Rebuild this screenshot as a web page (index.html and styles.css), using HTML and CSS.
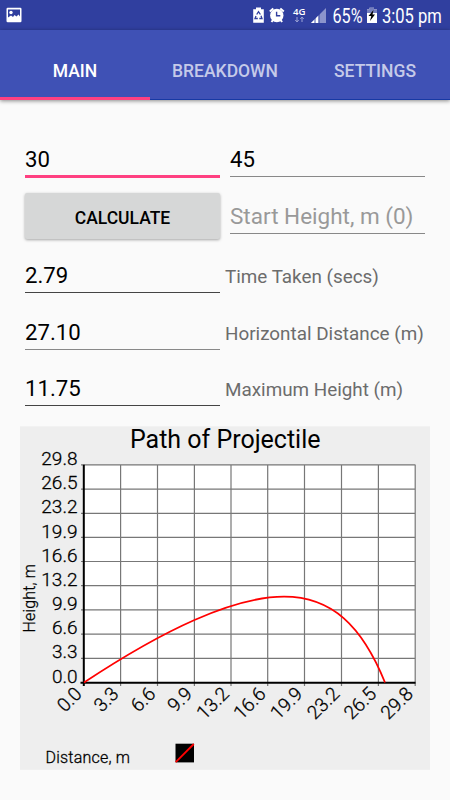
FILE: index.html
```html
<!DOCTYPE html>
<html lang="en">
<head>
<meta charset="utf-8">
<title>Projectile Calculator</title>
<link rel="stylesheet" href="styles.css">
</head>
<body>
<header class="status">
  <svg class="status-photo" width="16" height="16" viewBox="0 0 16 16"><rect x=".5" y=".8" width="15" height="14.5" rx="1.2" fill="#fff"/><path d="M2 2.500h12v7l-1.500-2-2 2-2-1.500-1.500 2L5 8.500l-3 2z" fill="#303f9f"/><circle cx="5" cy="5.500" r="1.700" fill="#fff"/></svg>
  <div class="status-right">
    <svg width="200" height="30" viewBox="250 0 200 30">
      <path d="M253.200 9.200h2.800V7.500h5v1.700h2.800v13.600h-10.600z" fill="#fff"/>
      <path d="M256.700 14.500l1.800-2.800 1.900 2.800M261 15.800l1 2.700h-2.700M257.800 18.500h-2.800l1-2.500" fill="none" stroke="#303f9f" stroke-width="1.300"/>
      <circle cx="276.800" cy="15.500" r="6.700" fill="#fff"/>
      <path d="M269.800 11.500l3.500-3M283.800 11.500l-3.500-3M273 20l-1.500 2M280.600 20l1.500 2" stroke="#fff" stroke-width="2"/>
      <path d="M276.600 11.800v4h3.700" fill="none" stroke="#303f9f" stroke-width="1.400"/>
      <text x="293" y="15" class="net" textLength="12.500" lengthAdjust="spacingAndGlyphs">4G</text>
      <path d="M297 17v4.500M295.300 20l1.700 2 1.700-2M302 22v-4.500M300.300 19l1.700-2 1.700 2" fill="none" stroke="#9ba3d5" stroke-width="1"/>
      <path d="M311 23L326 8v15z" fill="#8c94cc"/><path d="M311 23l7.500-7.500V23z" fill="#fff"/><path d="M315 17v6M319 13v10" stroke="#303f9f" stroke-width=".9"/>
      <text x="332.500" y="22.500" class="clock" textLength="30" lengthAdjust="spacingAndGlyphs">65%</text>
      <path d="M367 9.300h2.500V7.800h4.500v1.500h3V23h-10z" fill="#fff"/><path d="M367 9.300h2.500V7.800h4.500v1.500h3v3.700h-10z" fill="#757fbd"/><path d="M373.500 10l-5 6h2.800l-1.300 5 5-6.500h-2.500z" fill="#000"/>
      <text x="382" y="22.500" class="clock" textLength="59.800" lengthAdjust="spacingAndGlyphs">3:05 pm</text>
    </svg>
  </div>
</header>
<nav class="tabs">
  <a class="tab active">MAIN</a>
  <a class="tab">BREAKDOWN</a>
  <a class="tab">SETTINGS</a>
</nav>
<main>
  <section class="form">
    <div class="field focused">30</div>
    <div class="field soft">45</div>
    <button class="calculate">CALCULATE</button>
    <div class="field soft hint">Start Height, m (0)</div>
    <div class="field">2.79</div>
    <div class="label">Time Taken (secs)</div>
    <div class="field soft">27.10</div>
    <div class="label">Horizontal Distance (m)</div>
    <div class="field">11.75</div>
    <div class="label">Maximum Height (m)</div>
  </section>
  <svg class="chart" width="410" height="344" viewBox="20 426 410 344">
    <rect x="20" y="426.300" width="410" height="343.500" fill="#eee"/>
    <text x="130" y="447.700" class="title" textLength="190.500">Path of Projectile</text>
    <rect x="84" y="465" width="331" height="217.500" fill="#fff"/>
    <path class="grid" d="M81 464.800H415.500M81 489.100H415M81 513.300H415M81 537.400H415M81 561.500H415M81 585.700H415M81 609.900H415M81 634.200H415M81 658.400H415M120.600 465V686M157.500 465V686M194.400 465V686M231 465V686M267.700 465V686M304.500 465V686M341.500 465V686M378.400 465V686M415.200 465V686"/>
    <path d="M83.800 464.800V686M80.500 682.700H415.500" stroke="#000" stroke-width="2"/>
    <path d="M84 682.500C120.800 658.200 157.700 636.200 194.500 620C224 607 254 596.700 284 596.700C332 596.700 362 626 385 682.500" fill="none" stroke="#f00" stroke-width="1.800"/>
    <g class="tick" text-anchor="end">
      <text x="77.500" y="465">29.8</text><text x="77.500" y="489.200">26.5</text><text x="77.500" y="513.400">23.2</text><text x="77.500" y="537.500">19.9</text><text x="77.500" y="561.700">16.6</text><text x="77.500" y="585.900">13.2</text><text x="77.500" y="610">9.9</text><text x="77.500" y="634.200">6.6</text><text x="77.500" y="658.400">3.3</text><text x="77.500" y="682.500">0.0</text>
      <text transform="translate(83 695) rotate(-45)">0.0</text><text transform="translate(119.800 695) rotate(-45)">3.3</text><text transform="translate(156.600 695) rotate(-45)">6.6</text><text transform="translate(193.400 695) rotate(-45)">9.9</text><text transform="translate(230.200 695) rotate(-45)">13.2</text><text transform="translate(267 695) rotate(-45)">16.6</text><text transform="translate(303.800 695) rotate(-45)">19.9</text><text transform="translate(340.600 695) rotate(-45)">23.2</text><text transform="translate(377.400 695) rotate(-45)">26.5</text><text transform="translate(414.200 695) rotate(-45)">29.8</text>
    </g>
    <text class="axis" transform="translate(35 632.500) rotate(-90)" textLength="68.500">Height, m</text>
    <text class="axis" x="45.500" y="763" textLength="84.500">Distance, m</text>
    <rect x="175.500" y="743.700" width="18.500" height="18.700" fill="#000"/><path d="M175.700 762.200L193.800 744" stroke="#f00" stroke-width="1.800"/>
  </svg>
</main>
</body>
</html>
```
FILE: styles.css
```css
body {
  margin: 0;
  height: 800px;
  overflow: hidden;
  background: #fafafa;
  color: #000;
  font-family: Roboto, sans-serif;
}
svg { display: block; overflow: visible; }
.status {
  height: 30px;
  display: flex;
  justify-content: space-between;
  background: #303f9f;
}
.status-photo { margin: 7px 0 0 6px; }
.net { font: 600 9px "Open Sans", sans-serif; fill: #fff; }
.clock { font-size: 20px; fill: #fff; }
.tabs {
  height: 70px;
  display: grid;
  grid-template-columns: repeat(3, 1fr);
  background: #3f51b5;
  box-shadow: 0 1px 4px rgba(0, 0, 0, .45);
}
.tab {
  box-sizing: border-box;
  height: 70px;
  padding-top: 12px;
  border-bottom: 1px solid #1739a4;
  color: #c5cae9;
  font-size: 17.5px;
  font-weight: 500;
  line-height: 58px;
  text-align: center;
}
.tab.active { color: #fff; border-bottom: 3px solid #ff4081; }
.form {
  display: grid;
  grid-template-columns: 195px 195px;
  grid-template-rows: 56px 57px 59px 57px 56px;
  column-gap: 10px;
  padding: 21px 25px 0;
}
.field {
  box-sizing: border-box;
  height: 56px;
  align-self: end;
  padding-top: 23px;
  border-bottom: 1px solid #444;
  font-size: 22.2px;
  line-height: 30px;
}
.field.focused { border-bottom: 3px solid #ff4081; height: 57px; margin-bottom: -1px; }
.field.soft { border-bottom-color: #888; }
.field.hint { color: #999; font-size: 22.500px; white-space: nowrap; }
.calculate {
  height: 46px;
  align-self: end;
  margin-bottom: -5px;
  padding: 3px 0 0;
  border: 0;
  border-radius: 2px;
  background: #d6d7d7;
  box-shadow: 0 1px 3px rgba(0, 0, 0, .35);
  color: #000;
  font: 500 17.500px Roboto, sans-serif;
}
.label {
  align-self: end;
  margin: 0 0 1px -5px;
  height: 30px;
  color: #6c6c6c;
  font-size: 18.850px;
  line-height: 30px;
  white-space: nowrap;
}
.chart { margin: 20px 0 0 20px; }
.title { font-size: 25px; }
.grid { fill: none; stroke: #777; stroke-width: 1.200; }
.tick { font-size: 19px; }
.tick, .axis { font-weight: 300; stroke: #000; stroke-width: .3px; }
.axis { font-size: 16px; }
```
